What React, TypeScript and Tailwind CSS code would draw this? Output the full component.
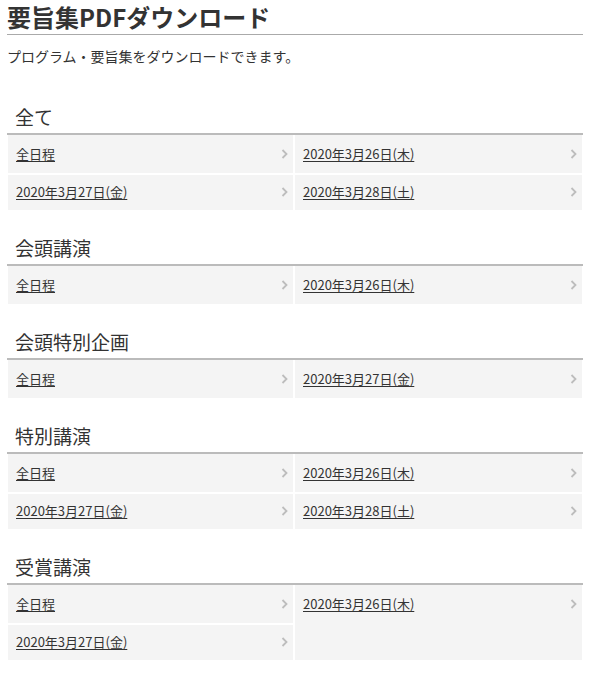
import React from 'react';

interface Section {
  title: string;
  links: string[];
}

const sections: Section[] = [
  { title: '全て', links: ['全日程', '2020年3月26日(木)', '2020年3月27日(金)', '2020年3月28日(土)'] },
  { title: '会頭講演', links: ['全日程', '2020年3月26日(木)'] },
  { title: '会頭特別企画', links: ['全日程', '2020年3月27日(金)'] },
  { title: '特別講演', links: ['全日程', '2020年3月26日(木)', '2020年3月27日(金)', '2020年3月28日(土)'] },
  { title: '受賞講演', links: ['全日程', '2020年3月26日(木)', '2020年3月27日(金)'] },
];

function Chevron() {
  return (
    <svg width="7" height="10" viewBox="0 0 7 10" className="shrink-0">
      <polyline points="1.5,1 5.5,5 1.5,9" fill="none" stroke="#bdbdbd" strokeWidth="1.8" />
    </svg>
  );
}

function LinkGrid({ links }: { links: string[] }) {
  return (
    <div className="mx-px grid grid-cols-2 items-start bg-[#f4f4f4]">
      {links.map((label, i) => (
        <div
          key={i}
          className={
            'flex items-center justify-between pl-2 pr-[5px] ' +
            (i % 2 === 0 ? 'border-r-2 border-white ' : '') +
            (i >= 2 ? 'h-[37px] border-t-2 border-white pb-px' : 'h-[38px]')
          }
        >
          <a href="#" className="text-[13px] text-[#333] underline underline-offset-2">
            {label}
          </a>
          <Chevron />
        </div>
      ))}
    </div>
  );
}

export default function App() {
  return (
    <div
      className="mx-[7px] w-[576px] pb-4 text-[#333]"
      style={{ fontFamily: '"Noto Sans CJK JP", "Noto Sans", sans-serif' }}
    >
      <h1 className="border-b border-[#aaa] text-[24px] font-bold leading-[34px]">要旨集PDFダウンロード</h1>
      <p className="mt-[11px] text-[14px] leading-[20px]">プログラム・要旨集をダウンロードできます。</p>

      <div className="mt-[37px]">
        {sections.map((s) => (
          <section key={s.title} className="mt-[24px] first:mt-0">
            <h2 className="border-b-2 border-[#bbb] pb-[2px] pl-2 text-[19px] font-normal leading-[28px]">{s.title}</h2>
            <LinkGrid links={s.links} />
          </section>
        ))}
      </div>
    </div>
  );
}
